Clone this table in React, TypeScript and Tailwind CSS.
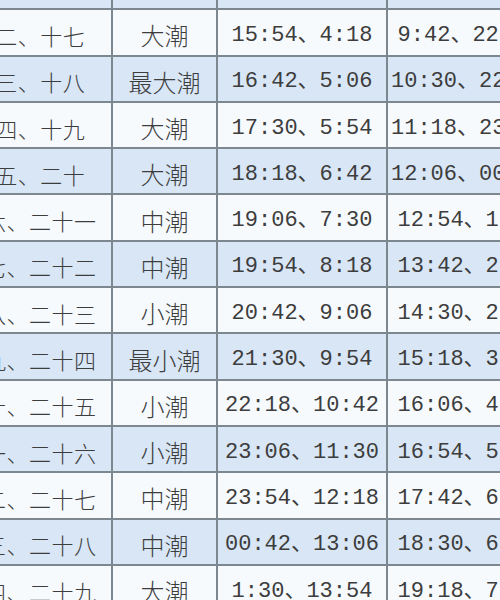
const ROWS = [
  ["", "", "", ""],
  ["初二、十七", "大潮", "15:54、4:18", "9:42、22:06"],
  ["初三、十八", "最大潮", "16:42、5:06", "10:30、22:54"],
  ["初四、十九", "大潮", "17:30、5:54", "11:18、23:42"],
  ["初五、二十", "大潮", "18:18、6:42", "12:06、00:30"],
  ["初六、二十一", "中潮", "19:06、7:30", "12:54、1:18"],
  ["初七、二十二", "中潮", "19:54、8:18", "13:42、2:06"],
  ["初八、二十三", "小潮", "20:42、9:06", "14:30、2:54"],
  ["初九、二十四", "最小潮", "21:30、9:54", "15:18、3:42"],
  ["初十、二十五", "小潮", "22:18、10:42", "16:06、4:30"],
  ["十一、二十六", "小潮", "23:06、11:30", "16:54、5:18"],
  ["十二、二十七", "中潮", "23:54、12:18", "17:42、6:06"],
  ["十三、二十八", "中潮", "00:42、13:06", "18:30、6:54"],
  ["十四、二十九", "大潮", "1:30、13:54", "19:18、7:42"],
];

const cell =
  "flex items-center justify-center pt-[6px] border-r-[2px] border-[#7d8790] text-[#3d3d3d] whitespace-nowrap";

export default function App() {
  return (
    <div className="w-[500px] h-[600px] overflow-hidden bg-[#f7fafd]">
      <div className="-ml-[53px] -mt-[36px] w-[620px]">
        {ROWS.map((r, i) => (
          <div
            key={i}
            className={`grid grid-cols-[166px_105px_170px_162px] h-[46.3px] border-b-[2px] border-[#7d8790] ${
              i % 2 === 0 ? "bg-[#d8e6f6]" : "bg-[#f7fafd]"
            }`}
          >
            <div className={`${cell} text-[22px] font-light tracking-[0.5px] font-['Noto_Sans_CJK_SC',sans-serif]`}>{r[0]}</div>
            <div className={`${cell} text-[24px] font-light font-['Noto_Sans_CJK_SC',sans-serif]`}>{r[1]}</div>
            <div className={`${cell} text-[22px] font-['Liberation_Mono','Noto_Sans_CJK_SC',monospace]`}>{r[2]}</div>
            <div className={`${cell} text-[22px] font-['Liberation_Mono','Noto_Sans_CJK_SC',monospace]`}>{r[3]}</div>
          </div>
        ))}
      </div>
    </div>
  );
}
